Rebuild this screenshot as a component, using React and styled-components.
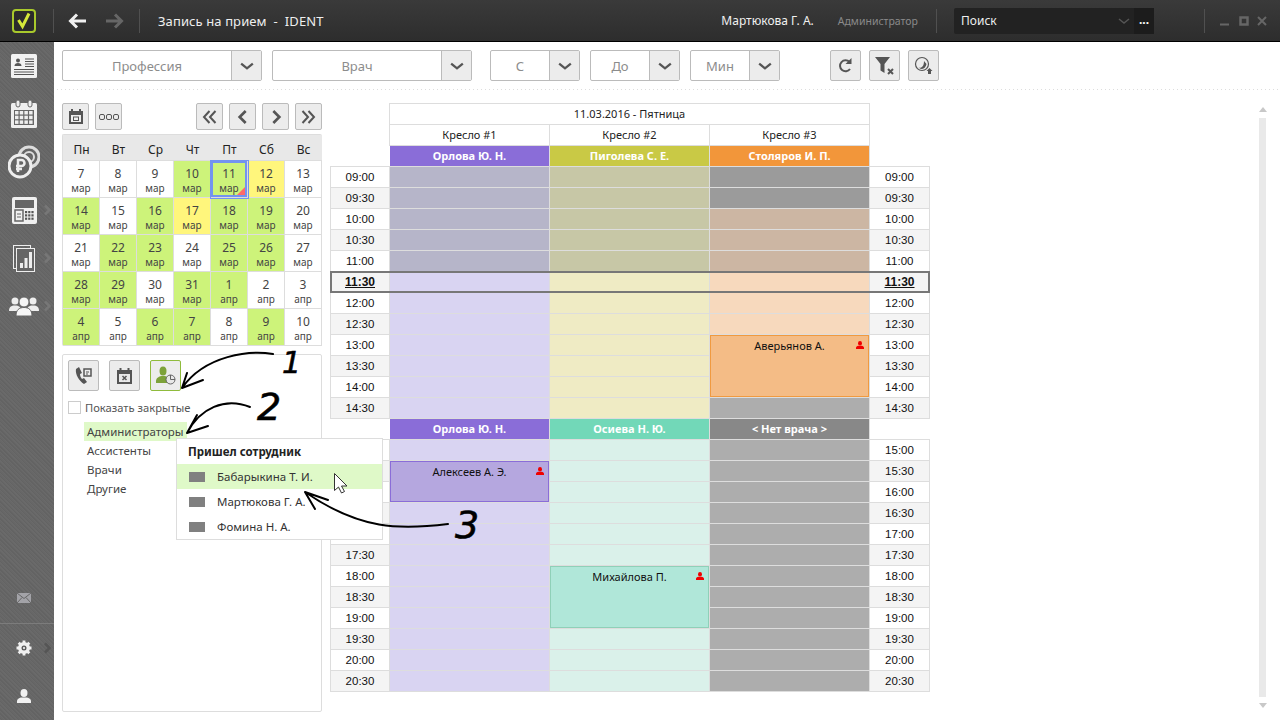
import React from "react";
import styled, { createGlobalStyle } from "styled-components";

const GlobalStyle = createGlobalStyle`
  html, body {
    margin: 0;
    padding: 0;
    background: #fff;
  }
  * {
    box-sizing: border-box;
  }
`;

// ----------------- Data ---------------------

const G = "#cdf37a";
const Y = "#fff67c";
const calendarWeeks = [
  [["7", "мар"], ["8", "мар"], ["9", "мар"], ["10", "мар", G], ["11", "мар", G, true], ["12", "мар", Y], ["13", "мар"]],
  [["14", "мар", G], ["15", "мар"], ["16", "мар", G], ["17", "мар", Y], ["18", "мар", G], ["19", "мар", G], ["20", "мар"]],
  [["21", "мар"], ["22", "мар", G], ["23", "мар", G], ["24", "мар"], ["25", "мар", G], ["26", "мар", G], ["27", "мар"]],
  [["28", "мар", G], ["29", "мар", G], ["30", "мар"], ["31", "мар", G], ["1", "апр", G], ["2", "апр"], ["3", "апр"]],
  [["4", "апр", G], ["5", "апр"], ["6", "апр", G], ["7", "апр", G], ["8", "апр"], ["9", "апр", G], ["10", "апр"]],
];

const segments = [
  {
    firstRow: 4,
    times: ["09:00", "09:30", "10:00", "10:30", "11:00", "11:30", "12:00", "12:30", "13:00", "13:30", "14:00", "14:30"],
    columns: [
      [{ bg: "#b6b5c9", n: 5 }, { bg: "#d9d4f2", n: 7 }],
      [{ bg: "#c7c7a6", n: 5 }, { bg: "#efebc4", n: 7 }],
      [
        { bg: "#9b9b9b", n: 2 },
        { bg: "#ccb6a3", n: 3 },
        { bg: "#f7d9bd", n: 3 },
        { bg: "#f4bc86", border: "#f09a40", n: 3, name: "Аверьянов А." },
        { bg: "#adadad", n: 1 },
      ],
    ],
  },
  {
    firstRow: 17,
    times: ["15:00", "15:30", "16:00", "16:30", "17:00", "17:30", "18:00", "18:30", "19:00", "19:30", "20:00", "20:30"],
    columns: [
      [
        { bg: "#d9d4f2", n: 1 },
        { bg: "#b5a7df", border: "#8a6dd8", n: 2, name: "Алексеев А. Э." },
        { bg: "#d9d4f2", n: 9 },
      ],
      [
        { bg: "#daf1ea", n: 6 },
        { bg: "#b0e7d9", border: "#8fd0b8", n: 3, name: "Михайлова П." },
        { bg: "#daf1ea", n: 3 },
      ],
      [{ bg: "#adadad", n: 12 }],
    ],
  },
];

const doctorRows = [
  { row: 3, list: [["Орлова Ю. Н.", "#8a6dd8"], ["Пиголева С. Е.", "#c9c945"], ["Столяров И. П.", "#f2963a"]] },
  { row: 16, list: [["Орлова Ю. Н.", "#8a6dd8"], ["Осиева Н. Ю.", "#72d8b8"], ["< Нет врача >", "#888888"]] },
];

// ----------------- Icons ---------------------

const Chevron = ({ dir = "down", size = 12, color = "#555", width = 2 }) => {
  const d = { down: "M1 4l5 4 5-4", left: "M8 1.500L3.500 6 8 10.500", right: "M4 1.500L8.500 6 4 10.500" }[dir];
  return (
    <svg width={size} height={size} viewBox="0 0 12 12">
      <path d={d} fill="none" stroke={color} strokeWidth={width} />
    </svg>
  );
};

const Logo = () => (
  <svg width="24" height="24" viewBox="0 0 24 24">
    <rect x="1" y="1" width="22" height="22" rx="3" fill="#2b2b2b" stroke="#a9c92c" strokeWidth="2" />
    <path d="M6.500 11l4 6.500L17 4.500" fill="none" stroke="#d5e83a" strokeWidth="3" />
  </svg>
);

const NavArrow = ({ flip, color }) => (
  <svg width="19" height="16" viewBox="0 0 19 16" style={flip ? { transform: "scaleX(-1)" } : undefined}>
    <path d="M18 8H3M9 1.500L2.500 8 9 14.500" fill="none" stroke={color} strokeWidth="3" />
  </svg>
);

const CardIcon = () => (
  <svg width="26" height="24" viewBox="0 0 26 24">
    <rect width="26" height="24" rx="1.500" fill="#f2f2f2" />
    <circle cx="7" cy="6.500" r="2" fill="#555" />
    <path d="M3.500 12c0-2 1.500-3 3.500-3s3.500 1 3.500 3z" fill="#555" />
    <path d="M14 5h9M14 7.500h9M14 10h9M14 12.500h9M3 15.500h20M3 18h20M3 20.500h20" stroke="#555" strokeWidth="1" />
  </svg>
);

const CalendarIcon = () => (
  <svg width="26" height="28" viewBox="0 0 26 28">
    <rect y="3" width="26" height="25" rx="1.500" fill="#eee" />
    <rect x="5" y="0" width="4" height="7" rx="2" fill="#eee" stroke="#666" />
    <rect x="17" y="0" width="4" height="7" rx="2" fill="#eee" stroke="#666" />
    <rect x="3" y="10" width="20" height="15" fill="#666" />
    {[0, 1, 2, 3].map((c) =>
      [0, 1, 2].map((r) => <rect key={`${c}-${r}`} x={4 + c * 4.7} y={11 + r * 4.7} width="3.500" height="3.500" fill="#eee" />)
    )}
  </svg>
);

const CoinsIcon = () => (
  <svg width="32" height="34" viewBox="0 0 32 34">
    <circle cx="21" cy="12" r="10" fill="none" stroke="#ddd" strokeWidth="3" />
    <circle cx="21" cy="12" r="5" fill="none" stroke="#ddd" strokeWidth="2" />
    <circle cx="12" cy="21" r="11" fill="#666" stroke="#eee" strokeWidth="3" />
    <path d="M10 27V15h3.500a3 3 0 010 6H8M8 24h6" fill="none" stroke="#eee" strokeWidth="2.500" />
  </svg>
);

const PosIcon = () => (
  <svg width="25" height="27" viewBox="0 0 25 27">
    <rect width="25" height="27" rx="2" fill="#f0f0f0" />
    <rect x="3" y="3" width="19" height="8" fill="#666" />
    <path d="M3 13h8v11H3z" fill="none" stroke="#666" strokeWidth="1.500" />
    <path d="M5 17h4M5 20h4" stroke="#666" />
    {[0, 1, 2].map((c) =>
      [0, 1, 2].map((r) => <rect key={`${c}-${r}`} x={13 + c * 3.2} y={14 + r * 3.3} width="2.200" height="2.200" fill="#555" />)
    )}
  </svg>
);

const ReportIcon = () => (
  <svg width="22" height="27" viewBox="0 0 22 27">
    <rect x="0.500" y="0.500" width="17" height="23" fill="none" stroke="#eee" />
    <rect x="3.500" y="3.500" width="18" height="23" fill="#666" stroke="#eee" />
    <path d="M7 23v-5h3v5zM11.500 23V13h3v10zM16 23V7h3v16z" fill="#eee" />
  </svg>
);

const UsersIcon = () => (
  <svg width="30" height="20" viewBox="0 0 30 20">
    <circle cx="6" cy="5" r="3.500" fill="#eee" />
    <circle cx="24" cy="5" r="3.500" fill="#eee" />
    <path d="M0 15c0-4 2-5.500 6-5.500s6 1.500 6 5.500zM18 15c0-4 2-5.500 6-5.500s6 1.500 6 5.500z" fill="#eee" />
    <circle cx="15" cy="6" r="5" fill="#f5f5f5" stroke="#666" />
    <path d="M7 20c0-6 3-8.500 8-8.500s8 2.500 8 8.500z" fill="#f5f5f5" stroke="#666" />
  </svg>
);

const MailIcon = () => (
  <svg width="14" height="10" viewBox="0 0 14 10">
    <rect width="14" height="10" fill="#a3a3a8" />
    <path d="M0 0l7 5.500L14 0M0 10l5-5.500M14 10L9 4.500" fill="none" stroke="#666" />
  </svg>
);

const GearIcon = () => (
  <svg width="16" height="16" viewBox="0 0 16 16">
    <path d="M8 .5v15M.5 8h15M2.700 2.700l10.600 10.600M13.300 2.700L2.700 13.300" stroke="#f0f0f0" strokeWidth="2.800" />
    <circle cx="8" cy="8" r="6" fill="#f0f0f0" />
    <circle cx="8" cy="8" r="2.500" fill="#555" />
    <circle cx="8" cy="8" r="1.200" fill="#ddd" />
  </svg>
);

const PersonIcon = ({ color = "#f0f0f0", size = 14 }) => (
  <svg width={size} height={size} viewBox="0 0 14 14">
    <ellipse cx="7" cy="4" rx="3.500" ry="4" fill={color} />
    <path d="M0 14v-2c0-2 2-3 4-3.500h6c2 .5 4 1.500 4 3.500v2z" fill={color} />
  </svg>
);

const DayIcon = () => (
  <svg width="14" height="15" viewBox="0 0 14 15">
    <path d="M0 2h14v13H0z" fill="#555" />
    <path d="M3 0v4M11 0v4" stroke="#555" strokeWidth="2" />
    <rect x="2" y="6" width="10" height="7" fill="#eee" />
    <rect x="4.500" y="8" width="5" height="3.500" fill="none" stroke="#555" />
  </svg>
);

const DotsIcon = () => (
  <svg width="20" height="6" viewBox="0 0 20 6">
    {[3, 10, 17].map((x) => (
      <rect key={x} x={x - 2.5} y="0.500" width="5" height="5" rx="1.500" fill="none" stroke="#555" />
    ))}
  </svg>
);

const DoubleChevron = ({ right }) => (
  <svg width="15" height="14" viewBox="0 0 15 14" style={right ? { transform: "scaleX(-1)" } : undefined}>
    <path d="M7.500 1L2 7l5.500 6M13.500 1L8 7l5.500 6" fill="none" stroke="#555" strokeWidth="2" />
  </svg>
);

const RefreshIcon = () => (
  <svg width="15" height="15" viewBox="0 0 15 15">
    <path d="M12 11a5.500 5.500 0 11-.5-7" fill="none" stroke="#555" strokeWidth="2" />
    <path d="M13.500 0v6h-6z" fill="#555" />
  </svg>
);

const FilterIcon = () => (
  <svg width="20" height="19" viewBox="0 0 20 19">
    <path d="M0 1h15L9.500 8v9l-4-2.500V8z" fill="#555" />
    <path d="M13 13l5 5M18 13l-5 5" stroke="#555" strokeWidth="2" />
  </svg>
);

const ColorIcon = () => (
  <svg width="20" height="19" viewBox="0 0 20 19">
    <circle cx="8" cy="8" r="6.500" fill="none" stroke="#555" strokeWidth="1.200" />
    <path d="M4.500 11.500c3 1 5.500-1 5.500-6.500l2.500 3c-.5 3-2.500 5-5.500 5z" fill="#555" />
    <path d="M12.500 15l3-3 3 3h-1.500v3h-3v-3z" fill="#555" />
  </svg>
);

const PhoneIcon = () => (
  <svg width="18" height="19" viewBox="0 0 18 19">
    <path d="M4 1L1 3c-1 5 3 12 8 15l3-2-3-4-2 1c-1-1-2-3-2-5l2-1z" fill="#555" />
    <path d="M9 3h7v7H9z" fill="none" stroke="#555" strokeWidth="1.500" />
    <path d="M11 6h3M11 8h2" stroke="#555" />
  </svg>
);

const CloseDayIcon = () => (
  <svg width="15" height="16" viewBox="0 0 15 16">
    <path d="M0 2h15v14H0z" fill="#555" />
    <path d="M3.500 0v4M11.500 0v4" stroke="#555" strokeWidth="2" />
    <rect x="2" y="6" width="11" height="8" fill="#e8e8e8" />
    <path d="M5.500 8l4 4M9.500 8l-4 4" stroke="#555" strokeWidth="1.500" />
  </svg>
);

const StaffIcon = () => (
  <svg width="20" height="19" viewBox="0 0 20 19">
    <ellipse cx="7" cy="5" rx="3.500" ry="4.500" fill="#7da23a" />
    <path d="M0 17v-2c0-3 3-5 7-5s7 2 7 5v2z" fill="#7da23a" />
    <circle cx="14.500" cy="13.500" r="4.500" fill="#e8e8e8" stroke="#666" />
    <path d="M14.500 9v4.500H19" fill="none" stroke="#666" />
  </svg>
);

// ----------------- Component ---------------------

function App() {
  const cells = [];

  segments.forEach((seg) => {
    seg.times.forEach((t, i) => {
      const row = seg.firstRow + i;
      const now = t === "11:30";
      cells.push(
        <TimeCell key={`l${t}`} $row={row} $col={1} $first $shade={i % 2 === 1} $now={now}>{t}</TimeCell>,
        <TimeCell key={`r${t}`} $row={row} $col={5} $shade={i % 2 === 1} $now={now}>{t}</TimeCell>
      );
    });
    seg.columns.forEach((runs, c) => {
      let row = seg.firstRow;
      runs.forEach((run) => {
        if (run.name) {
          cells.push(
            <SlotCell key={`${row}-${c}`} $row={row} $col={c + 2} $span={run.n} $bg="#ddd">
              <Appointment $bg={run.bg} $border={run.border}>
                {run.name}
                <AppointmentMark>
                  <PersonIcon color="#f00000" size={8} />
                </AppointmentMark>
              </Appointment>
            </SlotCell>
          );
          row += run.n;
        } else {
          for (let k = 0; k < run.n; k++) {
            cells.push(<SlotCell key={`${row}-${c}`} $row={row} $col={c + 2} $bg={run.bg} />);
            row += 1;
          }
        }
      });
    });
  });

  return (
    <Screen>
      <GlobalStyle />
      <TitleBar>
        <LogoBox><Logo /></LogoBox>
        <BarDivider $ml={17} />
        <BackSlot><NavArrow color="#f0f0f0" /></BackSlot>
        <ForwardSlot><NavArrow flip color="#666" /></ForwardSlot>
        <BarDivider $ml={15} />
        <PageTitle>Запись на прием&nbsp; -&nbsp; IDENT</PageTitle>
        <UserName>Мартюкова Г. А.</UserName>
        <UserRole>Администратор</UserRole>
        <BarDivider $ml={18} />
        <SearchBox>
          <SearchText>Поиск</SearchText>
          <Chevron color="#555" size={12} width={1.5} />
          <SearchDots>...</SearchDots>
        </SearchBox>
        <BarDivider $ml={50} />
        <WindowButtons>
          <svg width="11" height="10" viewBox="0 0 11 10"><path d="M0 8.500h9" stroke="#666" strokeWidth="2" /></svg>
          <svg width="10" height="10" viewBox="0 0 10 10"><rect x="1.500" y="1.500" width="7" height="7" fill="none" stroke="#666" strokeWidth="2.500" /></svg>
          <svg width="10" height="10" viewBox="0 0 10 10"><path d="M1 1l8 8M9 1l-8 8" stroke="#666" strokeWidth="2" /></svg>
        </WindowButtons>
      </TitleBar>

      <Body>
        <Sidebar>
          <NavItem><NavIconSlot><CardIcon /></NavIconSlot></NavItem>
          <NavItem><NavIconSlot><CalendarIcon /></NavIconSlot></NavItem>
          <NavItem><NavIconSlot><CoinsIcon /></NavIconSlot></NavItem>
          <NavItem><NavIconSlot><PosIcon /></NavIconSlot><NavChevron><Chevron dir="right" color="#777" size={12} width={2.500} /></NavChevron></NavItem>
          <NavItem><NavIconSlot><ReportIcon /></NavIconSlot><NavChevron><Chevron dir="right" color="#777" size={12} width={2.500} /></NavChevron></NavItem>
          <NavItem><NavIconSlot><UsersIcon /></NavIconSlot><NavChevron><Chevron dir="right" color="#777" size={12} width={2.500} /></NavChevron></NavItem>
          <SidebarSpacer />
          <NavItem><NavIconSlot><MailIcon /></NavIconSlot></NavItem>
          <SidebarDivider />
          <NavItem><NavIconSlot><GearIcon /></NavIconSlot><NavChevron><Chevron dir="right" color="#555" size={12} width={2.500} /></NavChevron></NavItem>
          <NavItem><NavIconSlot><PersonIcon /></NavIconSlot></NavItem>
        </Sidebar>

        <Main>
          <FilterBar>
            <FilterSelect $w={200}><SelectText>Профессия</SelectText><SelectArrow><Chevron size={14} /></SelectArrow></FilterSelect>
            <FilterSelect $w={200}><SelectText>Врач</SelectText><SelectArrow><Chevron size={14} /></SelectArrow></FilterSelect>
            <FilterSelect $w={90} $ml={8}><SelectText>С</SelectText><SelectArrow><Chevron size={14} /></SelectArrow></FilterSelect>
            <FilterSelect $w={90}><SelectText>До</SelectText><SelectArrow><Chevron size={14} /></SelectArrow></FilterSelect>
            <FilterSelect $w={90}><SelectText>Мин</SelectText><SelectArrow><Chevron size={14} /></SelectArrow></FilterSelect>
            <SquareButton $size={31} $ml={40}><RefreshIcon /></SquareButton>
            <SquareButton $size={31} $ml={-2}><FilterIcon /></SquareButton>
            <SquareButton $size={31} $ml={-2}><ColorIcon /></SquareButton>
          </FilterBar>

          <Content>
            <LeftColumn>
              <CalendarTools>
                <SquareButton $size={27}><DayIcon /></SquareButton>
                <SquareButton $size={27} $ml={-4}><DotsIcon /></SquareButton>
                <ToolsSpacer />
                <SquareButton $size={27}><DoubleChevron /></SquareButton>
                <SquareButton $size={27} $ml={-4}><Chevron dir="left" size={16} /></SquareButton>
                <SquareButton $size={27} $ml={-4}><Chevron dir="right" size={16} /></SquareButton>
                <SquareButton $size={27} $ml={-4}><DoubleChevron right /></SquareButton>
              </CalendarTools>

              <Calendar>
                {["Пн", "Вт", "Ср", "Чт", "Пт", "Сб", "Вс"].map((d) => (
                  <WeekDay key={d}>{d}</WeekDay>
                ))}
                {calendarWeeks.flat().map(([day, month, bg, selected]) => (
                  <DayCell key={day + month} $bg={bg} $selected={selected}>
                    <DayNumber>{day}</DayNumber>
                    <DayMonth>{month}</DayMonth>
                  </DayCell>
                ))}
              </Calendar>

              <StaffPanel>
                <PanelTools>
                  <SquareButton $size={31}><PhoneIcon /></SquareButton>
                  <SquareButton $size={31}><CloseDayIcon /></SquareButton>
                  <SquareButton $size={31} $active><StaffIcon /></SquareButton>
                </PanelTools>
                <ClosedRow>
                  <CheckBox />
                  Показать закрытые
                </ClosedRow>
                <GroupList>
                  <GroupItem $active>Администраторы</GroupItem>
                  <GroupItem>Ассистенты</GroupItem>
                  <GroupItem>Врачи</GroupItem>
                  <GroupItem>Другие</GroupItem>
                </GroupList>
                <Popup>
                  <PopupTitle>Пришел сотрудник</PopupTitle>
                  <PopupRow $active><Swatch />Бабарыкина Т. И.</PopupRow>
                  <PopupRow><Swatch />Мартюкова Г. А.</PopupRow>
                  <PopupRow><Swatch />Фомина Н. А.</PopupRow>
                </Popup>
              </StaffPanel>
            </LeftColumn>

            <Schedule>
              <HeadCell $row={1} $col={2} $to={5} $top>11.03.2016 - Пятница</HeadCell>
              {["Кресло #1", "Кресло #2", "Кресло #3"].map((c, i) => (
                <HeadCell key={c} $row={2} $col={i + 2} $to={i + 3}>{c}</HeadCell>
              ))}
              {doctorRows.map((d) =>
                d.list.map(([name, color], i) => (
                  <DoctorCell key={d.row + name} $row={d.row} $col={i + 2} $bg={color}>{name}</DoctorCell>
                ))
              )}
              {cells}
              <NowLine />
            </Schedule>

            <ScrollBar>
              <ScrollArrow />
              <ScrollTrack />
              <ScrollArrow $down />
            </ScrollBar>
          </Content>
        </Main>
      </Body>

      <Annotations width="1280" height="720" viewBox="0 0 1280 720">
        <g fill="none" stroke="#000" strokeWidth="2" strokeLinecap="round">
          <path d="M273 354C250 350 205 355 182 388M182 388L187 373M182 388L203 380" />
          <path d="M250 407C225 397 200 408 187 433M187 433L197 415M187 433L208 426" />
          <path d="M448 524C400 530 360 530 305 492M305 492L328 500M305 492L315 509" />
        </g>
        <path d="M334.500 473.500v17l4-3.500 3 6 3-1.500-3-5.500h5.500z" fill="#fff" stroke="#333" />
      </Annotations>
      <HandDigit $x={282} $y={343} $size={30}>1</HandDigit>
      <HandDigit $x={257} $y={387} $size={38}>2</HandDigit>
      <HandDigit $x={455} $y={505} $size={38}>3</HandDigit>
    </Screen>
  );
}

export default App;

// ----------------- Styles section ---------------------

const FONT = `"Noto Sans", "Liberation Sans", sans-serif`;

const Screen = styled.div`
  position: relative;
  width: 1280px;
  height: 720px;
  overflow: hidden;
  display: flex;
  flex-direction: column;
  font-family: ${FONT};
  background: #fff;
`;

const TitleBar = styled.div`
  height: 42px;
  flex: none;
  display: flex;
  align-items: center;
  padding-right: 13px;
  background: linear-gradient(#3a3a3a, #2d2d2d);
  border-bottom: 1px solid #000;
`;

const LogoBox = styled.div`
  margin-left: 12px;
  display: flex;
`;

const BarDivider = styled.div`
  width: 1px;
  height: 24px;
  margin-left: ${(p) => p.$ml}px;
  background: #505050;
`;

const BackSlot = styled.div`
  margin-left: 14px;
  display: flex;
`;

const ForwardSlot = styled.div`
  margin-left: 18px;
  display: flex;
`;

const PageTitle = styled.div`
  margin-left: 18px;
  flex: 1;
  color: #eee;
  font-size: 13px;
  letter-spacing: 0.1px;
`;

const UserName = styled.div`
  color: #f0f0f0;
  font-size: 12px;
`;

const UserRole = styled.div`
  margin-left: 24px;
  color: #8a8a8a;
  font-size: 10.500px;
`;

const SearchBox = styled.div`
  margin-left: 17px;
  width: 200px;
  height: 26px;
  display: flex;
  align-items: center;
  padding-left: 7px;
  background: #222;
  border-radius: 2px;
`;

const SearchText = styled.div`
  flex: 1;
  color: #eee;
  font-size: 12px;
`;

const SearchDots = styled.div`
  width: 20px;
  height: 26px;
  margin-left: 4px;
  text-align: center;
  color: #fff;
  font-size: 12px;
  font-weight: 700;
  line-height: 24px;
  background: #1c1c1c;
`;

const WindowButtons = styled.div`
  margin-left: 15px;
  display: flex;
  gap: 8px;
`;

const Body = styled.div`
  flex: 1;
  display: flex;
  min-height: 0;
`;

const Sidebar = styled.div`
  width: 54px;
  flex: none;
  display: flex;
  flex-direction: column;
  background: repeating-linear-gradient(45deg, #6a6a6a 0 1px, #636363 1px 2px, #676767 2px 3px);
`;

const NavItem = styled.div`
  height: 48px;
  flex: none;
  display: flex;
  align-items: center;
`;

const NavIconSlot = styled.div`
  width: 48px;
  display: flex;
  justify-content: center;
`;

const NavChevron = styled.div`
  margin-left: -7px;
  display: flex;
`;

const SidebarSpacer = styled.div`
  flex: 1;
`;

const SidebarDivider = styled.div`
  height: 1px;
  flex: none;
  margin-top: 1px;
  background: #7c7c7c;
`;

const Main = styled.div`
  flex: 1;
  min-width: 0;
  display: flex;
  flex-direction: column;
`;

const FilterBar = styled.div`
  height: 48px;
  flex: none;
  margin-left: 3px;
  padding: 8px 0 0 5px;
  display: flex;
  align-items: flex-start;
  gap: 10px;
  background: linear-gradient(to right, #ddd 1px, transparent 1px) left bottom / 4px 1px repeat-x;
`;

const FilterSelect = styled.div`
  width: ${(p) => p.$w}px;
  margin-left: ${(p) => p.$ml || 0}px;
  height: 31px;
  display: flex;
  border: 1px solid #bbb;
  border-radius: 2px;
`;

const SelectText = styled.div`
  flex: 1;
  text-align: center;
  color: #8c8c8c;
  font-size: 13px;
  line-height: 31px;
`;

const SelectArrow = styled.div`
  width: 30px;
  display: flex;
  align-items: center;
  justify-content: center;
  background: #ececec;
  border-left: 1px solid #bbb;
`;

const SquareButton = styled.div`
  width: ${(p) => p.$size}px;
  height: ${(p) => p.$size}px;
  margin-left: ${(p) => p.$ml || 0}px;
  flex: none;
  display: flex;
  align-items: center;
  justify-content: center;
  background: #ececec;
  border: 1px solid ${(p) => (p.$active ? "#8fbb3c" : "#bbb")};
  border-radius: 2px;
`;

const Content = styled.div`
  flex: 1;
  min-height: 0;
  display: flex;
  padding-left: 8px;
`;

const LeftColumn = styled.div`
  width: 260px;
  flex: none;
  padding: 13px 0 8px;
  display: flex;
  flex-direction: column;
`;

const CalendarTools = styled.div`
  display: flex;
  gap: 10px;
  margin-bottom: 4px;
`;

const ToolsSpacer = styled.div`
  flex: 1;
`;

const Calendar = styled.div`
  display: grid;
  grid-template-columns: repeat(7, 37px);
  grid-template-rows: 26px repeat(5, 37px);
  border-top: 1px solid #ddd;
  border-left: 1px solid #ddd;
  border-radius: 2px;
  margin-bottom: 8px;
`;

const WeekDay = styled.div`
  background: #e8e8e8;
  color: #222;
  font-size: 12px;
  line-height: 29px;
  text-align: center;
  border-bottom: 1px solid #ddd;
`;

const DayCell = styled.div`
  position: relative;
  display: flex;
  flex-direction: column;
  align-items: center;
  padding-top: 5px;
  background: ${(p) => p.$bg || "#fff"};
  border-right: 1px solid #ddd;
  border-bottom: 1px solid #ddd;
  box-shadow: ${(p) => (p.$selected ? "0 0 0 1px #7393f0, inset 0 0 0 2px #7393f0" : "none")};
  z-index: ${(p) => (p.$selected ? 1 : 0)};

  &::after {
    content: "";
    display: ${(p) => (p.$selected ? "block" : "none")};
    position: absolute;
    right: 2px;
    bottom: 2px;
    border-style: solid;
    border-width: 0 0 8px 8px;
    border-color: transparent transparent #ff6a6a transparent;
  }
`;

const DayNumber = styled.div`
  color: #444;
  font-size: 12px;
  line-height: 16px;
`;

const DayMonth = styled.div`
  color: #444;
  font-size: 10px;
  line-height: 13px;
`;

const StaffPanel = styled.div`
  position: relative;
  flex: 1;
  padding: 5px;
  border: 1px solid #ddd;
  border-radius: 2px;
`;

const PanelTools = styled.div`
  display: flex;
  gap: 10px;
`;

const ClosedRow = styled.div`
  display: flex;
  align-items: center;
  gap: 4px;
  margin-top: 9px;
  color: #555;
  font-size: 11.200px;
  line-height: 15px;
`;

const CheckBox = styled.div`
  width: 13px;
  height: 13px;
  background: #fff;
  border: 1px solid #ccc;
`;

const GroupList = styled.div`
  margin: 7px 0 0 16px;
  display: flex;
  flex-direction: column;
  align-items: flex-start;
`;

const GroupItem = styled.div`
  height: 19px;
  padding: 0 3px;
  color: #444;
  font-size: 11.500px;
  line-height: 19px;
  background: ${(p) => (p.$active ? "#dff9c8" : "transparent")};
`;

const Popup = styled.div`
  position: absolute;
  left: 113px;
  top: 83px;
  width: 207px;
  background: #fff;
  border: 1px solid #ddd;
  z-index: 2;
`;

const PopupTitle = styled.div`
  height: 25px;
  padding-left: 11px;
  color: #222;
  font-size: 11.500px;
  font-weight: 700;
  line-height: 26px;
`;

const PopupRow = styled.div`
  height: 25px;
  display: flex;
  align-items: center;
  padding-left: 12px;
  color: #333;
  font-size: 11.500px;
  background: ${(p) => (p.$active ? "#dff9c8" : "transparent")};
`;

const Swatch = styled.div`
  width: 16px;
  height: 10px;
  margin-right: 12px;
  background: #808080;
`;

const Schedule = styled.div`
  margin: 14px 0 0 8px;
  width: 600px;
  flex: none;
  align-self: flex-start;
  display: grid;
  grid-template-columns: 60px 160px 160px 160px 60px;
  grid-auto-rows: 21px;
`;

const HeadCell = styled.div`
  grid-row: ${(p) => p.$row};
  grid-column: ${(p) => p.$col} / ${(p) => p.$to};
  border-right: 1px solid #ddd;
  border-bottom: 1px solid #ddd;
  border-left: ${(p) => (p.$col === 2 ? "1px solid #ddd" : "none")};
  margin-left: ${(p) => (p.$col === 2 ? "-1px" : "0")};
  border-top: ${(p) => (p.$top ? "1px solid #ddd" : "none")};
  margin-top: ${(p) => (p.$top ? "-1px" : "0")};
  color: #222;
  font-size: 11px;
  line-height: 20px;
  text-align: center;
`;

const DoctorCell = styled.div`
  grid-row: ${(p) => p.$row};
  grid-column: ${(p) => p.$col};
  background: ${(p) => p.$bg};
  border-right: 1px solid #ddd;
  border-bottom: 1px solid #ddd;
  color: #fff;
  font-size: 11px;
  font-weight: 700;
  line-height: 20px;
  text-align: center;
`;

const TimeCell = styled.div`
  grid-row: ${(p) => p.$row};
  grid-column: ${(p) => p.$col};
  background: ${(p) => (p.$shade ? "#f4f4f4" : "#fff")};
  border-right: 1px solid #ddd;
  border-bottom: 1px solid #ddd;
  border-left: ${(p) => (p.$first ? "1px solid #ddd" : "none")};
  border-top: 1px solid #ddd;
  margin-top: -1px;
  color: #111;
  font-family: "Liberation Sans", sans-serif;
  font-size: ${(p) => (p.$now ? "12px" : "11.500px")};
  font-weight: ${(p) => (p.$now ? 700 : 400)};
  text-decoration: ${(p) => (p.$now ? "underline" : "none")};
  line-height: 21px;
  text-align: center;
`;

const SlotCell = styled.div`
  grid-row: ${(p) => p.$row} / span ${(p) => p.$span || 1};
  grid-column: ${(p) => p.$col};
  background: ${(p) => p.$bg};
  border-right: 1px solid #ddd;
  border-bottom: 1px solid #ddd;
  display: flex;
`;

const Appointment = styled.div`
  position: relative;
  flex: 1;
  background: ${(p) => p.$bg};
  border: 1px solid ${(p) => p.$border};
  color: #111;
  font-size: 11px;
  line-height: 19px;
  text-align: center;
`;

const AppointmentMark = styled.span`
  position: absolute;
  top: 5px;
  right: 4px;
  display: flex;
`;

const NowLine = styled.div`
  grid-row: 9;
  grid-column: 1 / -1;
  margin-top: -1px;
  border: 2px solid #777;
  pointer-events: none;
`;

const ScrollBar = styled.div`
  margin: 17px 13px 12px auto;
  width: 9px;
  display: flex;
  flex-direction: column;
  align-items: center;
`;

const ScrollArrow = styled.div`
  flex: none;
  border-left: 4.500px solid transparent;
  border-right: 4.500px solid transparent;
  border-bottom: ${(p) => (p.$down ? "none" : "5px solid #c8c8c8")};
  border-top: ${(p) => (p.$down ? "5px solid #c8c8c8" : "none")};
`;

const ScrollTrack = styled.div`
  flex: 1;
  width: 7px;
  margin: 6px 0;
  background: #e9e9e9;
`;

const Annotations = styled.svg`
  position: absolute;
  left: 0;
  top: 0;
  pointer-events: none;
  z-index: 3;
`;

const HandDigit = styled.div`
  position: absolute;
  left: ${(p) => p.$x}px;
  top: ${(p) => p.$y}px;
  z-index: 3;
  color: #000;
  font-family: "DejaVu Sans", sans-serif;
  font-size: ${(p) => p.$size}px;
  font-style: italic;
  line-height: 40px;
  -webkit-text-stroke: 0.6px #000;
`;
